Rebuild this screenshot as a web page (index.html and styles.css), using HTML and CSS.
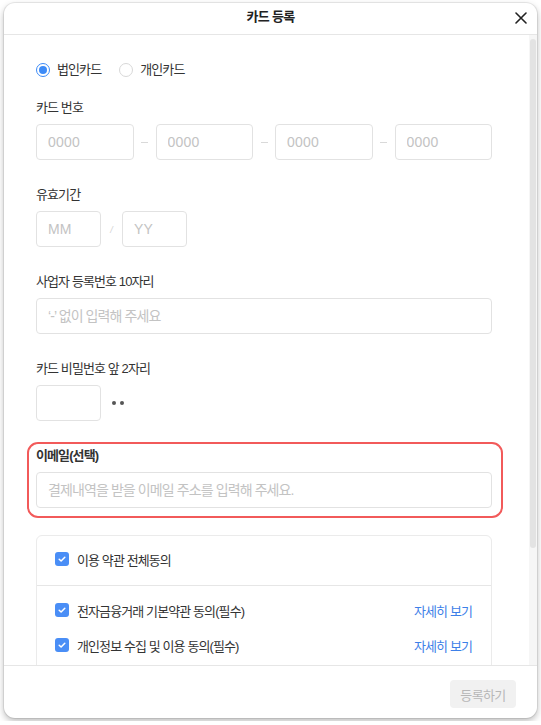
FILE: index.html
```html
<!DOCTYPE html>
<html lang="ko">
<head>
<meta charset="utf-8">
<title>카드 등록</title>
<link rel="stylesheet" href="styles.css">
</head>
<body>
<div class="modal">
  <header class="modal-header">
    <span class="spacer"></span>
    <h1 class="modal-title">카드 등록</h1>
    <button class="close-btn" type="button" aria-label="닫기">
      <svg width="12" height="12" viewBox="0 0 12 12"><path d="M1 1L11 11M11 1L1 11" stroke="#222" stroke-width="1.6" stroke-linecap="round"/></svg>
    </button>
  </header>

  <div class="modal-main">
    <div class="modal-body">
      <div class="radio-group">
        <label class="radio checked"><span class="radio-dot"></span><span class="radio-text">법인카드</span></label>
        <label class="radio"><span class="radio-dot"></span><span class="radio-text">개인카드</span></label>
      </div>

      <section class="field">
        <div class="field-label">카드 번호</div>
        <div class="card-row">
          <input class="text-input latin" placeholder="0000">
          <span class="dash"></span>
          <input class="text-input latin" placeholder="0000">
          <span class="dash"></span>
          <input class="text-input latin" placeholder="0000">
          <span class="dash"></span>
          <input class="text-input latin" placeholder="0000">
        </div>
      </section>

      <section class="field">
        <div class="field-label">유효기간</div>
        <div class="expiry-row">
          <input class="text-input latin small" placeholder="MM">
          <span class="slash">/</span>
          <input class="text-input latin small" placeholder="YY">
        </div>
      </section>

      <section class="field">
        <div class="field-label">사업자 등록번호 10자리</div>
        <input class="text-input" placeholder="‘-’ 없이 입력해 주세요">
      </section>

      <section class="field">
        <div class="field-label">카드 비밀번호 앞 2자리</div>
        <div class="pw-row">
          <input class="text-input small" type="password">
          <span class="pw-dots"><i></i><i></i></span>
        </div>
      </section>

      <section class="field email-field">
        <div class="field-label strong">이메일(선택)</div>
        <input class="text-input" placeholder="결제내역을 받을 이메일 주소를 입력해 주세요.">
      </section>

      <div class="agree-box">
        <div class="agree-all">
          <div class="agree-row">
            <span class="check"><svg width="14" height="14" viewBox="0 0 14 14"><path d="M4.2 7.2L6.1 9L9.8 5.2" fill="none" stroke="#fff" stroke-width="1.5" stroke-linecap="round" stroke-linejoin="round"/></svg></span>
            <span class="agree-text">이용 약관 전체동의</span>
          </div>
        </div>
        <div class="agree-list">
          <div class="agree-row">
            <span class="check"><svg width="14" height="14" viewBox="0 0 14 14"><path d="M4.2 7.2L6.1 9L9.8 5.2" fill="none" stroke="#fff" stroke-width="1.5" stroke-linecap="round" stroke-linejoin="round"/></svg></span>
            <span class="agree-text">전자금융거래 기본약관 동의(필수)</span>
            <a class="detail-link">자세히 보기</a>
          </div>
          <div class="agree-row">
            <span class="check"><svg width="14" height="14" viewBox="0 0 14 14"><path d="M4.2 7.2L6.1 9L9.8 5.2" fill="none" stroke="#fff" stroke-width="1.5" stroke-linecap="round" stroke-linejoin="round"/></svg></span>
            <span class="agree-text">개인정보 수집 및 이용 동의(필수)</span>
            <a class="detail-link">자세히 보기</a>
          </div>
        </div>
      </div>
    </div>
    <div class="scroll-rail"><div class="scroll-thumb"></div></div>
  </div>

  <footer class="modal-footer">
    <button class="submit-btn" type="button" disabled>등록하기</button>
  </footer>
</div>
</body>
</html>
```

FILE: styles.css
```css
* { box-sizing: border-box; }

html, body {
  margin: 0;
  padding: 0;
  background: #ffffff;
}

body {
  padding: 3px 4px;
  font-family: "Liberation Sans", "Noto Sans CJK KR", sans-serif;
  color: #333;
  font-size: 13px;
}

.modal {
  width: 533px;
  height: 715px;
  background: #fff;
  border-radius: 11px;
  overflow: hidden;
  display: flex;
  flex-direction: column;
  box-shadow: 0 0 0 1px rgba(0, 0, 0, 0.07), 0 3px 7px rgba(0, 0, 0, 0.28);
}

.modal-header {
  height: 32px;
  flex: none;
  display: grid;
  grid-template-columns: 1fr auto 1fr;
  align-items: center;
  border-bottom: 1px solid #e6e6e6;
  padding: 0 10px 3px 10px;
}

.modal-title {
  margin: 0;
  font-size: 13px;
  font-weight: 700;
  color: #222;
  letter-spacing: -0.7px;
  line-height: 18px;
}

.close-btn {
  justify-self: end;
  border: 0;
  background: none;
  padding: 0;
  width: 12px;
  height: 12px;
  margin-top: 2px;
  display: flex;
}

.modal-main {
  height: 630px;
  flex: none;
  display: flex;
}

.modal-body {
  flex: 1;
  min-width: 0;
  overflow: hidden;
  padding: 25px 37px 0 32px;
}

.scroll-rail {
  width: 8px;
  flex: none;
  background: #f6f6f6;
  padding: 4px 1px 0 1px;
}

.scroll-thumb {
  height: 509px;
  border-radius: 3px;
  background: #e3e3e3;
}

.radio-group {
  display: flex;
  gap: 18px;
  height: 20px;
  align-items: center;
}

.radio {
  display: flex;
  align-items: center;
  gap: 7px;
}

.radio-dot {
  width: 14px;
  height: 14px;
  border-radius: 50%;
  border: 1px solid #d8d8d8;
  display: flex;
  align-items: center;
  justify-content: center;
}

.radio.checked .radio-dot {
  border: 1.5px solid #3d8bf7;
}

.radio.checked .radio-dot::after {
  content: "";
  width: 8px;
  height: 8px;
  border-radius: 50%;
  background: #3d8bf7;
}

.radio-text {
  font-size: 13px;
  letter-spacing: -0.9px;
  color: #333;
  line-height: 18px;
}

.field {
  margin-top: 26px;
}

.radio-group + .field {
  margin-top: 19px;
}

.field-label {
  font-size: 13px;
  line-height: 18px;
  letter-spacing: -0.9px;
  color: #333;
  margin-bottom: 7px;
}

.field-label.strong {
  font-weight: 700;
  color: #333;
}

.text-input {
  display: block;
  height: 36px;
  border: 1px solid #e2e2e2;
  border-radius: 4px;
  padding: 0 11px;
  font-family: "Liberation Sans", "Noto Sans CJK KR", sans-serif;
  font-size: 14px;
  letter-spacing: -0.9px;
  color: #333;
  background: #fff;
  outline: none;
  min-width: 0;
  width: 100%;
}

.text-input.latin {
  letter-spacing: 0.2px;
}

.text-input::placeholder {
  color: #c3c3c3;
}

.text-input.small {
  width: 65px;
}

.card-row {
  display: grid;
  grid-template-columns: 1fr 22px 1fr 22px 1fr 22px 1fr;
  align-items: center;
}

.dash {
  justify-self: center;
  width: 7px;
  height: 1px;
  background: #d9d9d9;
}

.expiry-row,
.pw-row {
  display: flex;
  align-items: center;
}

.slash {
  width: 21px;
  text-align: center;
  color: #d2d2d2;
  font-size: 9px;
  font-style: italic;
  padding-top: 2px;
}

.pw-dots {
  display: flex;
  gap: 4px;
  margin-left: 11px;
}

.pw-dots i {
  width: 4px;
  height: 4px;
  border-radius: 50%;
  background: #555;
}

.email-field {
  position: relative;
}

.email-field::after {
  content: "";
  position: absolute;
  top: -5px;
  bottom: -10px;
  left: -9px;
  right: -11px;
  border: 2.5px solid #f25a5a;
  border-radius: 11px;
  pointer-events: none;
}

.agree-box {
  margin-top: 27px;
  border: 1px solid #ebebeb;
  border-radius: 6px;
  padding-bottom: 40px;
}

.agree-all {
  padding: 13px 19px 16px 18px;
  border-bottom: 1px solid #e6e6e6;
}

.agree-list {
  padding: 14px 19px 0 18px;
  display: flex;
  flex-direction: column;
  gap: 15px;
}

.agree-row {
  display: flex;
  align-items: center;
  height: 20px;
}

.check {
  width: 14px;
  height: 14px;
  border-radius: 3px;
  background: #4a8ef6;
  display: flex;
  flex: none;
}

.agree-text {
  margin-left: 8px;
  font-size: 13px;
  letter-spacing: -0.9px;
  color: #333;
  flex: 1;
}

.detail-link {
  font-size: 13px;
  letter-spacing: -0.9px;
  color: #3d80e8;
}

.modal-footer {
  flex: 1;
  border-top: 1px solid #e6e6e6;
  display: flex;
  justify-content: flex-end;
  align-items: flex-start;
  padding: 14px 21px 0 0;
}

.submit-btn {
  width: 66px;
  height: 28px;
  border: 0;
  border-radius: 4px;
  background: #f1f1f1;
  color: #b7b7b7;
  font-family: "Liberation Sans", "Noto Sans CJK KR", sans-serif;
  font-size: 13px;
  letter-spacing: -0.6px;
  padding: 0;
}
```
